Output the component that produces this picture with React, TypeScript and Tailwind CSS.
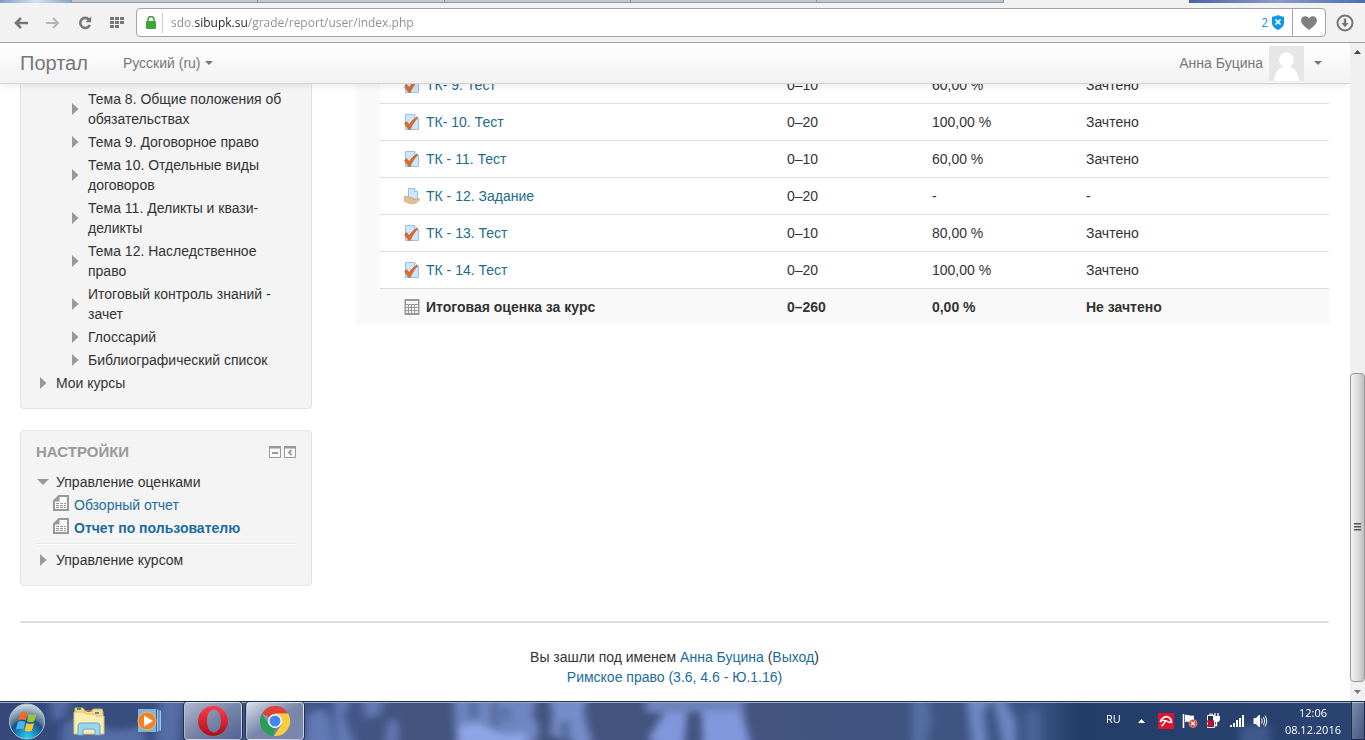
import type { ReactNode } from "react";

const tabs = ["", "", "", "", ""];

const topics = [
  "Тема 8. Общие положения об обязательствах",
  "Тема 9. Договорное право",
  "Тема 10. Отдельные виды договоров",
  "Тема 11. Деликты и квази-деликты",
  "Тема 12. Наследственное право",
  "Итоговый контроль знаний - зачет",
  "Глоссарий",
  "Библиографический список",
];

const grades = [
  { name: "ТК- 9. Тест", range: "0–10", percent: "60,00 %", letter: "Зачтено", type: "quiz" },
  { name: "ТК- 10. Тест", range: "0–20", percent: "100,00 %", letter: "Зачтено", type: "quiz" },
  { name: "ТК - 11. Тест", range: "0–10", percent: "60,00 %", letter: "Зачтено", type: "quiz" },
  { name: "ТК - 12. Задание", range: "0–20", percent: "-", letter: "-", type: "assign" },
  { name: "ТК - 13. Тест", range: "0–10", percent: "80,00 %", letter: "Зачтено", type: "quiz" },
  { name: "ТК - 14. Тест", range: "0–20", percent: "100,00 %", letter: "Зачтено", type: "quiz" },
];

/* ---------- icons ---------- */

function QuizIcon() {
  return (
    <svg width="16" height="16" viewBox="0 0 16 16" className="shrink-0">
      <path d="M1.5.5h9l4 4v11h-13z" fill="#cfe5f9" stroke="#9bc0e6" />
      <path d="M10.5.5v4h4" fill="#eef7ff" stroke="#9bc0e6" />
      <path d="M.5 9.600 2.600 7.600l2.600 3C7.400 7.200 9.800 4.800 12.800 3l1 .8C10.800 6.800 8.500 10.500 6.300 15.300H4.500z" fill="#dd6b2b" stroke="#b9501d" strokeWidth=".5" />
    </svg>
  );
}

function AssignIcon() {
  return (
    <svg width="16" height="16" viewBox="0 0 16 16" className="shrink-0">
      <path d="M4.500.5h6l3 3v8h-9z" fill="#cfe5f9" stroke="#9bc0e6" />
      <path d="M10.500.5v3h3" fill="#eef7ff" stroke="#9bc0e6" />
      <path d="M0 8.500c2-.6 4-.3 5 .6l4 .9c1 .3.800 1.300-.2 1.400l3.200-.3c2-.7 3.500-.8 3.800 0 .2.700-3 3.900-5 4.200-3 .5-6 .2-8-1L0 13z" fill="#e3bd93" stroke="#c39a6d" strokeWidth=".6" />
    </svg>
  );
}

function CalcIcon() {
  return (
    <svg width="16" height="16" viewBox="0 0 16 16" className="shrink-0">
      <path d="M.5 0h15v16H.500z" fill="#999" />
      <path d="M2 2h12v3H2zM2 6h2v2H2zM5 6h2v2H5zM8 6h2v2H8zM11 6h3v2h-3zM2 9h2v2H2zM5 9h2v2H5zM8 9h2v2H8zM11 9h3v2h-3zM2 12h2v2H2zM5 12h2v2H5zM8 12h2v2H8zM11 12h3v2h-3z" fill="#f4f4f4" />
    </svg>
  );
}

function ReportIcon() {
  return (
    <svg width="16" height="16" viewBox="0 0 16 16" className="shrink-0">
      <path d="M6 1h9v14H1V6z" fill="#fafafa" stroke="#999" strokeWidth="2" />
      <path d="M1 6.500 6.500 1v5.500z" fill="#999" />
      <path d="M3 8h3v1H3zM7 8h3v1H7zM11 8h2v1h-2zM3 10h3v1H3zM7 10h3v1H7zM11 10h2v1h-2zM3 12h3v1H3zM7 12h3v1H7zM11 12h2v1h-2z" fill="#999" />
    </svg>
  );
}

function ArrowRight() {
  return (
    <svg width="7" height="12" viewBox="0 0 7 12" className="shrink-0">
      <path d="M0 0l6.500 6L0 12z" fill="#999" />
    </svg>
  );
}

function Caret() {
  return (
    <svg width="8" height="4" viewBox="0 0 8 4" className="shrink-0">
      <path d="M0 0h8L4 4z" fill="#777" />
    </svg>
  );
}

/* ---------- browser chrome ---------- */

function BrowserBar() {
  return (
    <header className="shrink-0 border-b border-[#a0a0a0] bg-[#f2f2f2]">
      <div className="flex h-[3px]">
        <div className="w-[71px] bg-gradient-to-r from-[#7f9cc4] via-[#d3e2f3] to-[#8ea6c8]" />
        {tabs.map((_, i) => (
          <div key={i} className="flex-1 border-b border-l border-[#8f98a5] bg-[#c1c7cf]" />
        ))}
        <div className="flex-1 border-l border-[#8f98a5] bg-[#f2f2f2]" />
        <div className="w-44 bg-gradient-to-r from-[#4a62a8] via-[#8a9cc8] to-[#4f6cb4]" />
      </div>
      <div className="flex h-[39px] items-center pl-[13px] pr-[11px]">
        <div className="flex items-center gap-4">
          <button type="button" aria-label="Назад" className="flex h-6 w-4 items-center justify-center">
            <svg width="14" height="12" viewBox="0 0 14 12" fill="none" stroke="#777" strokeWidth="2.600">
              <path d="M7 1 2 6l5 5M2 6h12" />
            </svg>
          </button>
          <button type="button" aria-label="Вперёд" className="flex h-6 w-4 items-center justify-center">
            <svg width="14" height="12" viewBox="0 0 14 12" fill="none" stroke="#b4b4b4" strokeWidth="2">
              <path d="m7 1 5 5-5 5M12 6H0" />
            </svg>
          </button>
          <button type="button" aria-label="Обновить" className="flex h-6 w-4 items-center justify-center">
            <svg width="14" height="14" viewBox="0 0 14 14" fill="none" stroke="#777" strokeWidth="2.600">
              <path d="M11 3.600A5 5 0 1 0 11.800 9" />
              <path d="M13.200.500v5.700H7.500z" fill="#777" stroke="none" />
            </svg>
          </button>
          <button type="button" aria-label="Экспресс-панель" className="flex h-6 w-4 items-center justify-center">
            <svg width="14" height="11" viewBox="0 0 14 11" fill="#777">
              <path d="M0 0h4v3H0zM5 0h4v3H5zM10 0h4v3h-4zM0 4h4v3H0zM5 4h4v3H5zM10 4h4v3h-4zM0 8h4v3H0zM5 8h4v3H5z" />
            </svg>
          </button>
        </div>
        <div className="ml-[11px] flex h-[29px] flex-1 items-center rounded border border-[#a3a3a3] bg-white">
          <svg width="10" height="13" viewBox="0 0 10 13" className="ml-[9px]">
            <path d="M2 6V3.500a3 3 0 0 1 6 0V6" fill="none" stroke="#3a9a35" strokeWidth="1.500" />
            <rect y="5" width="10" height="8" rx="1" fill="#3fa63a" />
          </svg>
          <div className="ml-1.5 h-5 w-px bg-[#c8c8c8]" />
          <input
            type="text"
            aria-label="Адрес"
            defaultValue="sdo.sibupk.su/grade/report/user/index.php"
            className="ml-2 min-w-0 flex-1 bg-[linear-gradient(90deg,#8c8c8c_24px,#222_24px,#222_77px,#8c8c8c_77px)] bg-clip-text font-['Open_Sans',sans-serif] text-[12px] leading-5 text-transparent outline-none"
          />
          <span className="mr-1 font-['Open_Sans',sans-serif] text-[12px] text-[#1e90e0]">2</span>
          <svg width="12" height="15" viewBox="0 0 12 15" className="mr-2">
            <path d="M6 0c2 1.300 4 1.700 6 1.700V8c0 3.500-3 5.500-6 7-3-1.500-6-3.500-6-7V1.700C2 1.700 4 1.300 6 0z" fill="#1296e8" />
            <path d="m3.500 4.500 5 5m0-5-5 5" stroke="#fff" strokeWidth="1.700" />
          </svg>
          <button type="button" aria-label="В закладки" className="flex h-full w-[33px] items-center justify-center border-l border-[#a3a3a3]">
            <svg width="16" height="14" viewBox="0 0 16 14" fill="#808080">
              <path d="M8 14C4 11 0 8 0 4.300 0 .3 5.500-1.500 8 2.300 10.500-1.500 16 .3 16 4.300 16 8 12 11 8 14z" />
            </svg>
          </button>
        </div>
        <button type="button" aria-label="Загрузки" className="ml-2.5">
          <svg width="18" height="18" viewBox="0 0 18 18" fill="none" stroke="#777" strokeWidth="2">
            <circle cx="9" cy="9" r="7.500" />
            <path d="M9 4.500v6" strokeWidth="2.500" />
            <path d="M5.300 9h7.400L9 13.200z" fill="#777" stroke="none" />
          </svg>
        </button>
      </div>
    </header>
  );
}

function Scrollbar() {
  return (
    <div className="flex w-[15px] shrink-0 flex-col items-center bg-[#f0f0f0]">
      <svg width="15" height="17" viewBox="0 0 15 17">
        <path d="M4 11h7L7.500 7z" fill="#444" />
      </svg>
      <div className="flex-1" />
      <div className="flex h-[47%] w-full items-center justify-center rounded-sm border border-[#989898] bg-gradient-to-r from-[#f3f3f3] via-[#dedede] to-[#bebec2]">
        <svg width="7" height="8" viewBox="0 0 7 8" fill="#555">
          <path d="M0 0h7v1.500H0zM0 3h7v1.500H0zM0 6h7v1.500H0z" />
        </svg>
      </div>
      <svg width="15" height="19" viewBox="0 0 15 19">
        <path d="M4 8h7l-3.500 4z" fill="#777" />
      </svg>
    </div>
  );
}

/* ---------- page ---------- */

function PortalNav() {
  return (
    <nav className="absolute inset-x-0 top-0 z-10 flex h-[41px] items-center border-b border-[#d4d4d4] bg-gradient-to-b from-white to-[#f2f2f2] px-5 text-[#777] shadow-[0_1px_8px_rgba(0,0,0,0.1)]">
      <a href="#" className="text-xl leading-5">
        Портал
      </a>
      <button type="button" className="ml-[35px] flex items-center gap-1">
        Русский (ru)
        <Caret />
      </button>
      <button type="button" className="ml-auto mr-2 flex items-center">
        Анна Буцина
        <svg width="35" height="35" viewBox="0 0 35 35" className="ml-1.5 mr-2.5">
          <path d="M0 0h35v35H0z" fill="#e6e6e6" />
          <circle cx="17.500" cy="14" r="7.500" fill="#fff" />
          <path d="M5 35c0-7 4-12.500 9-14h7c5 1.500 9 7 9 14z" fill="#fff" />
        </svg>
        <Caret />
      </button>
    </nav>
  );
}

function TreeItem({ children }: { children: ReactNode }) {
  return (
    <li>
      <button type="button" className="flex items-center gap-[9px] text-left">
        <ArrowRight />
        <span>{children}</span>
      </button>
    </li>
  );
}

function Sidebar() {
  return (
    <aside className="w-[292px] shrink-0">
      <section className="rounded-b border border-t-0 border-[#e3e3e3] bg-[#f4f4f4] pb-[15px] pl-[19px] pr-4 pt-[46px]">
        <ul className="flex flex-col gap-[3px] pl-8">
          {topics.map((topic) => (
            <TreeItem key={topic}>{topic}</TreeItem>
          ))}
        </ul>
        <ul className="mt-[3px]">
          <TreeItem>Мои курсы</TreeItem>
        </ul>
      </section>

      <section className="mt-[21px] rounded border border-[#e3e3e3] bg-[#f4f4f4] pb-[15px] pl-[15px] pr-[15px] pt-[11px]">
        <div className="flex items-center">
          <h2 className="flex-1 text-[15px] font-bold uppercase text-[#999]">Настройки</h2>
          <button type="button" aria-label="Скрыть блок" className="mr-[3px]">
            <svg width="12" height="12" viewBox="0 0 12 12" className="block">
              <path d="M.5 1v10.500h11V1" fill="#fafafa" stroke="#999" />
              <path d="M0 0h12v2.500H0zM3 6h6v2H3z" fill="#999" />
            </svg>
          </button>
          <button type="button" aria-label="Переместить в док">
            <svg width="12" height="12" viewBox="0 0 12 12" className="block">
              <path d="M.5 1v10.500h11V1" fill="#fafafa" stroke="#999" />
              <path d="M0 0h12v2.500H0z" fill="#999" />
              <path d="M7.500 4 5 6.500 7.500 9" fill="none" stroke="#999" strokeWidth="1.800" />
            </svg>
          </button>
        </div>
        <button type="button" className="mt-2.5 flex items-center gap-[7px] pl-px">
          <svg width="12" height="6" viewBox="0 0 12 6">
            <path d="M0 0h12L6 6z" fill="#999" />
          </svg>
          Управление оценками
        </button>
        <ul className="mt-[3px] flex flex-col gap-[3px] pl-[17px] text-[#1c6c9c]">
          <li>
            <a href="#" className="flex gap-[5px]">
              <ReportIcon />
              Обзорный отчет
            </a>
          </li>
          <li>
            <a href="#" className="flex gap-[5px] font-bold">
              <ReportIcon />
              Отчет по пользователю
            </a>
          </li>
        </ul>
        <ul className="mt-[5px] border-t border-[#e6e6e6] pl-1 pt-1.5 shadow-[inset_0_1px_0_#fff]">
          <TreeItem>Управление курсом</TreeItem>
        </ul>
      </section>
    </aside>
  );
}

function GradeTable() {
  return (
    <table className="w-full table-fixed border-separate border-spacing-0 text-left">
      <colgroup>
        <col className="w-6" />
        <col className="w-[41%]" />
        <col className="w-[145px]" />
        <col className="w-[154px]" />
        <col />
      </colgroup>
      <tbody>
        {grades.map((row, i) => (
          <tr key={row.name}>
            {i === 0 && <td rowSpan={grades.length + 1} className="bg-[#f9f9f9]" />}
            <td className="border-t border-[#ddd] py-2 pl-6">
              <a href="#" className="flex items-center gap-1.5 text-[#1c6c8c]">
                {row.type === "quiz" ? <QuizIcon /> : <AssignIcon />}
                {row.name}
              </a>
            </td>
            <td className="border-t border-[#ddd] p-2">{row.range}</td>
            <td className="border-t border-[#ddd] p-2">{row.percent}</td>
            <td className="border-t border-[#ddd] p-2">{row.letter}</td>
          </tr>
        ))}
        <tr className="bg-[#f9f9f9] font-bold">
          <td className="border-t border-[#ddd] py-2 pl-6">
            <div className="flex items-center gap-1.5">
              <CalcIcon />
              Итоговая оценка за курс
            </div>
          </td>
          <td className="border-t border-[#ddd] p-2">0–260</td>
          <td className="border-t border-[#ddd] p-2">0,00 %</td>
          <td className="border-t border-[#ddd] p-2">Не зачтено</td>
        </tr>
      </tbody>
    </table>
  );
}

/* ---------- taskbar ---------- */

function Wallpaper() {
  return (
    <svg className="absolute inset-0 h-full w-full" viewBox="0 0 1365 39" preserveAspectRatio="none">
      <defs>
        <filter id="soft" x="-20%" y="-50%" width="140%" height="200%">
          <feGaussianBlur stdDeviation="4 3" />
        </filter>
        <linearGradient id="night">
          <stop offset="0" stopColor="#34497a" />
          <stop offset=".25" stopColor="#42568a" />
          <stop offset=".3" stopColor="#43547f" />
          <stop offset=".55" stopColor="#43547f" />
          <stop offset=".76" stopColor="#3c5586" />
          <stop offset=".79" stopColor="#233c68" />
          <stop offset="1" stopColor="#2b4472" />
        </linearGradient>
      </defs>
      <path d="M0 0h1365v39H0z" fill="url(#night)" />
      <g filter="url(#soft)" fill="#7b93d2">
        <path d="M50 -5l22 0-6 20-14 6zM62 25q20-18 34-4t44 4l10 25H60zM160 -5h24l-6 50h-22z" opacity=".45" />
        <path d="M308 14q14-12 22 2l4 30h-30zM334 -8h18l-8 24 12 30h-20zM360 -8h26l-6 22-14 4zM388 20q10-6 10 6v20h-14z" opacity=".6" />
        <path d="M453 -10h84l-4 26q14 14-4 32h-72z" opacity=".8" />
        <path d="M458 26q20-8 34 2t34 2v20h-68z" fill="#8ea4e4" />
        <path d="M546 -10h44q-8 16-4 30l8 28-20-6-24-8q6-24-4-44z" opacity=".9" />
        <path d="M646 -10h98v22h-98z" opacity=".75" />
        <path d="M664 12h24l-4 36h-20l-16-10zM700 10h42l10 38h-50z" fill="#8197dc" />
        <path d="M912 -5h16l4 26-8 28h-12z" opacity=".4" />
        <path d="M966 -5h26l-8 18 4 32h-16zM992 -8h10l14 30v28h-12z" opacity=".8" />
        <path d="M1026 10h14v36h-14z" opacity=".25" />
        <path d="M1240 24h30v20h-30z" opacity=".3" />
      </g>
      <g filter="url(#soft)" fill="#43547f" opacity=".7">
        <path d="M470 -5h7v22h-7zM492 0h6v26h-6zM504 6h5v14h-5zM690 12h9v34h-9zM560 24l8-6 2 30h-8z" />
      </g>
      <path d="M0 0h1365v1H0z" fill="#22344e" />
      <path d="M0 1h1365v1H0z" fill="#9badc6" />
    </svg>
  );
}

function Taskbar() {
  return (
    <footer className="relative h-[39px] shrink-0 overflow-hidden font-['Open_Sans',sans-serif] text-white">
      <Wallpaper />
      <div className="relative flex h-full items-center">
        <button type="button" aria-label="Пуск" className="ml-2">
          <svg width="38" height="38" viewBox="0 0 38 38">
            <defs>
              <radialGradient id="orb" cx=".5" cy=".95" r=".95">
                <stop offset="0" stopColor="#28d3f2" />
                <stop offset=".3" stopColor="#1a86bd" />
                <stop offset=".52" stopColor="#1d4f7d" />
                <stop offset=".6" stopColor="#54758f" />
                <stop offset="1" stopColor="#d5dfe6" />
              </radialGradient>
            </defs>
            <circle cx="19" cy="19.500" r="17.500" fill="url(#orb)" stroke="#a9c5da" />
            <path d="M12.500 11c2.500-1.800 5-1.500 7 0l-1.700 7.500c-2.400-1.400-5-1.400-7.500 0z" fill="#ee6a28" />
            <path d="M20.700 11.800c2.500 1.500 5 1.300 8-.5l-2.300 8c-2.500 1.500-5 1.300-7.400-.1z" fill="#92c83c" />
            <path d="M9.800 20c2.500-1.400 5-1.300 7.500.1l-2 7.700c-2.200-1.300-4.800-1.400-7.500 0z" fill="#4ab4ee" />
            <path d="M18.600 21c2.200 1.200 4.800 1.300 7.500 0l-2.200 7.600c-2.600 1.400-5 1.200-7.300-.1z" fill="#fbc72d" />
          </svg>
        </button>
        <button type="button" aria-label="Проводник" className="ml-[26px]">
          <svg width="34" height="32" viewBox="0 0 34 32">
            <path d="M3 3h8l2 3h7l1-2h9l1 3v21H3z" fill="#f4df91" stroke="#cdb062" />
            <path d="M5 3h4v2H5z" fill="#3d9a49" />
            <path d="M15 5h4v2h-4z" fill="#d0533a" />
            <path d="M23 7h4v2h-4z" fill="#4b88c7" />
            <path d="M2 7h10l2 2h8l2 2h8v18H2z" fill="#faedb0" stroke="#d8c078" />
            <path d="M6 30V21q0-3 3-3h16q3 0 3 3v9h-5v-4q0-2-2-2h-8q-2 0-2 2v4z" fill="#9cd3ee" stroke="#61a9ce" />
          </svg>
        </button>
        <button type="button" aria-label="Проигрыватель" className="ml-[29px]">
          <svg width="28" height="28" viewBox="0 0 28 28">
            <path d="M3 2h18v23H3z" fill="#7cb6dc" />
            <path d="M22 2.500h1.500v22H22zM24.500 3.500H26v20h-1.500z" fill="#8fd0ee" />
            <circle cx="12" cy="14" r="9" fill="#ee8227" stroke="#f7b56e" />
            <path d="M9 8.500 18 14l-9 5.500z" fill="#fff" />
          </svg>
        </button>
        <button
          type="button"
          aria-label="Opera"
          className="ml-[21px] mt-px flex h-[38px] w-[58px] items-center justify-center rounded-sm border border-white/50 bg-gradient-to-br from-white/60 via-white/30 to-white/10 shadow-[0_0_0_1px_#1f2f4d]"
        >
          <svg width="30" height="30" viewBox="0 0 30 30">
            <defs>
              <linearGradient id="opera" x2="0" y2="1">
                <stop offset="0" stopColor="#ff3b49" />
                <stop offset="1" stopColor="#b00d1a" />
              </linearGradient>
            </defs>
            <path fillRule="evenodd" d="M15 0a15 15 0 1 1 0 30 15 15 0 0 1 0-30zm1 3.500c-4.500 0-7 5-7 11.500s2.500 11.500 7 11.500S23 21.500 23 15 20.500 3.500 16 3.500z" fill="url(#opera)" />
          </svg>
        </button>
        <button
          type="button"
          aria-label="Chrome"
          className="ml-1 mt-px flex h-[38px] w-[58px] items-center justify-center rounded-sm border border-white/50 bg-gradient-to-br from-white/80 via-white/30 to-white/30 shadow-[0_0_0_1px_#1f2f4d]"
        >
          <svg width="30" height="30" viewBox="0 0 30 30">
            <path d="M15 15 2 7.500A15 15 0 0 1 28 7.500H15z" fill="#db4437" />
            <path d="M2 7.500 8.900 18.500 15 22l-2 7.900A15 15 0 0 1 2 7.500z" fill="#2a9d57" />
            <path d="M28 7.500A15 15 0 0 1 14 30l7.500-11.500L20 10l-5-2.500z" fill="#fccd3f" />
            <circle cx="15" cy="15" r="7" fill="#fff" />
            <circle cx="15" cy="15" r="5.500" fill="#4285f4" />
          </svg>
        </button>

        <div className="ml-auto flex h-full items-center">
          <button type="button" className="mb-1 text-[11px] leading-4">
            RU
          </button>
          <svg width="7" height="4" viewBox="0 0 7 4" className="ml-[17px]">
            <path d="M0 4h7L3.500 0z" fill="#fff" />
          </svg>
          <svg width="16" height="16" viewBox="0 0 16 16" className="ml-[13px]">
            <path d="M0 0h16v16H0z" fill="#e2122b" />
            <path d="M2.300 9C4 4.500 8 2.500 11 4.500c2 1.300 2.600 3.500 2.300 5.500" fill="none" stroke="#fff" strokeWidth="1.700" />
            <path d="M2.300 9c2-1.800 4-2 6-1s3.500 2 5 1.500M8 7.500 4.500 12.500H3" fill="none" stroke="#fff" strokeWidth="1.400" />
          </svg>
          <svg width="16" height="16" viewBox="0 0 16 16" className="ml-2">
            <path d="M1.500 1v14" stroke="#fff" strokeWidth="1.600" />
            <path d="M3 2c3-1 4 1.500 9 .5V9c-4 1-6-1-9 0z" fill="#fff" />
            <circle cx="11" cy="10.500" r="4" fill="#dc3b2c" stroke="#f5c6b8" strokeWidth=".6" />
            <path d="m9.200 8.700 3.600 3.600m0-3.600-3.600 3.600" stroke="#fff" strokeWidth="1.400" />
          </svg>
          <svg width="16" height="16" viewBox="0 0 16 16" className="ml-2">
            <path d="M1.500 2.500v12h7v-12zM3.500 1h3v1.500h-3z" fill="#23304c" stroke="#fff" />
            <path d="M9 0v3M12 0v3" stroke="#fff" strokeWidth="1.300" />
            <path d="M7 3h7v3q0 3-3.500 3T7 6z" fill="#fff" />
            <path d="M10.500 8v4.500h-2" fill="none" stroke="#fff" strokeWidth="1.500" />
            <path d="m1.500 7.500 6 6m0-6-6 6" stroke="#c8102a" strokeWidth="2.500" />
          </svg>
          <svg width="15" height="12" viewBox="0 0 15 12" className="ml-2" fill="#fff">
            <path d="M0 10h2v2H0zM3 8h2v4H3zM6 5h2v7H6zM9 3h2v9H9zM12 0h2v12h-2z" />
          </svg>
          <svg width="16" height="14" viewBox="0 0 16 14" className="ml-2" fill="none" stroke="#fff">
            <path d="M1 4.500h2L6.500 1v12L3 9.500H1z" fill="#fff" />
            <path d="M8.500 4.500q1.500 2.500 0 5M10.500 3q2.500 4 0 8M12 1.500q3.500 5.500 0 11" />
          </svg>
          <div className="ml-4 text-center text-[11px] leading-[17px]">
            <div>12:06</div>
            <div>08.12.2016</div>
          </div>
          <button type="button" aria-label="Свернуть все окна" className="ml-2.5 h-full w-3.5 border border-[#1c2c4a] bg-gradient-to-br from-white/40 to-white/10" />
        </div>
      </div>
    </footer>
  );
}

export default function App() {
  return (
    <div className="flex h-screen flex-col overflow-hidden bg-white font-['Liberation_Sans',Arial,sans-serif] text-sm leading-5 text-[#333]">
      <BrowserBar />
      <div className="flex min-h-0 flex-1">
        <div className="relative min-w-0 flex-1 overflow-hidden">
          <PortalNav />
          <div className="pl-5 pr-[21px]">
            <div className="flex items-start gap-11">
              <Sidebar />
              <main className="min-w-0 flex-1 pt-[23px]">
                <GradeTable />
              </main>
            </div>
            <div className="mt-[35px] border-t-2 border-[#ddd] pt-6 text-center">
              <p>
                Вы зашли под именем{" "}
                <a href="#" className="text-[#1c6c9c]">
                  Анна Буцина
                </a>{" "}
                (
                <a href="#" className="text-[#1c6c9c]">
                  Выход
                </a>
                )
              </p>
              <a href="#" className="text-[#1c6c9c]">
                Римское право (3.6, 4.6 - Ю.1.16)
              </a>
            </div>
          </div>
        </div>
        <Scrollbar />
      </div>
      <Taskbar />
    </div>
  );
}
